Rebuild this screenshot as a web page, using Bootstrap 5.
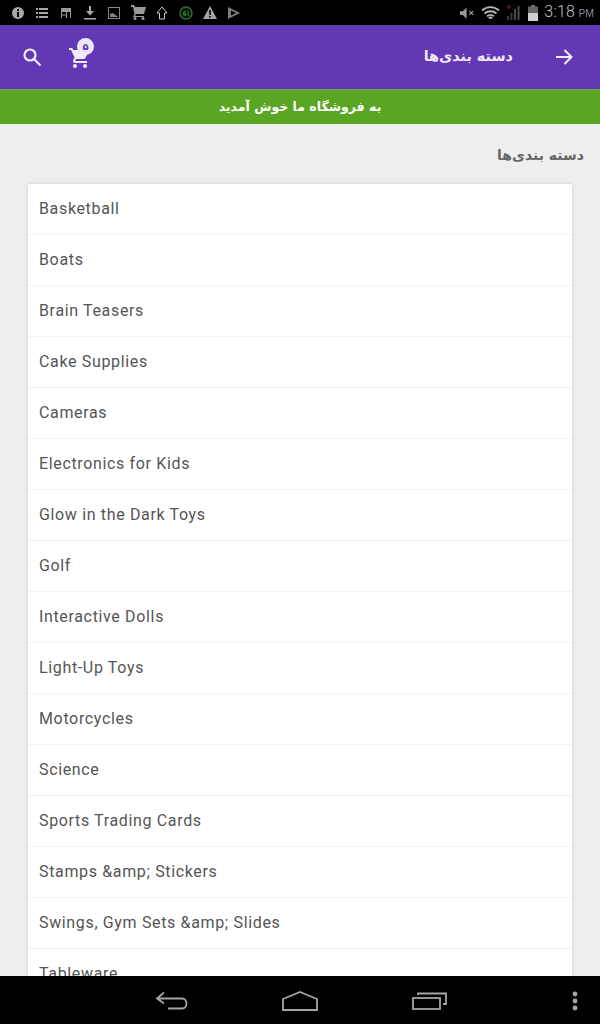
<!DOCTYPE html>
<html lang="fa">
<head>
<meta charset="utf-8">
<title>دسته بندی‌ها</title>
<link rel="stylesheet" href="https://cdn.jsdelivr.net/npm/bootstrap@5.3.0/dist/css/bootstrap.min.css">
<style>
html,body{height:1024px;overflow:hidden;background:#eee}
.shell{height:1024px;font-family:Roboto,"Noto Sans",sans-serif}
.sysbar{height:25px;background:#000;padding:0 6px 0 6px;flex:none}
.sysbar svg{display:block;flex:none}
.sysslot{width:24px;height:25px}
.sysright{gap:6px}
.clock{font-family:Roboto,sans-serif;font-weight:300;font-size:16px;color:#c4c4c4;line-height:25px;letter-spacing:.2px}
.clock span{font-size:10px;margin-left:1px}
.appbar{height:64px;background:#6238b4;flex:none;padding:0 26px 0 22px;color:#fff}
.faword{font-family:"DejaVu Sans","Noto Sans",sans-serif;font-weight:700}
.apptitle{font-size:14.4px;color:#f1e9fb;margin-right:41px;line-height:1;margin-top:-1px}
.cartwrap{position:relative;margin-left:26px;width:24px;height:24px}
.cartbadge{position:absolute;top:-7px;left:9px;width:17px;height:17px;border-radius:50%;background:#efe6fa;color:#6238b4;font-size:10px;font-weight:700;line-height:17px;text-align:center;font-family:"DejaVu Sans",sans-serif}
.promo{height:35px;flex:none;background:#5aa523;border-top:1px solid #6b9f3f;color:#fff;font-size:12.5px;line-height:33px;text-align:center}
.pagearea{flex:1 1 auto;min-height:0;overflow:hidden;background:#eee;padding:0 28px}
.heading{font-size:14px;color:#666;text-align:right;margin:22px -12px 20px 0;line-height:18px}
.catlist{--bs-list-group-border-color:#f3f3f3;--bs-list-group-border-radius:3px;box-shadow:0 0 3px rgba(0,0,0,.18)}
.catlist .list-group-item{height:51px;padding:0 11px;font-size:16px;line-height:49px;color:#555;letter-spacing:.65px;border-left:0;border-right:0}
.catlist .list-group-item:first-child{border-top:0}
.navkeys{height:48px;flex:none;background:#000;padding:2px 22px 0 155px}
.navkeys svg{display:block;flex:none}
.homekey{margin-left:93px}
.recentkey{margin-left:94px}
.morekey{margin-left:auto}
</style>
</head>
<body>
<div class="shell d-flex flex-column">
  <div class="sysbar d-flex align-items-center justify-content-between">
    <div class="d-flex align-items-center">
      <div class="sysslot d-flex align-items-center justify-content-center"><svg width="14" height="14" viewBox="0 0 14 14"><circle cx="7" cy="7" r="6" fill="#a8a8a8"/><rect x="6" y="6" width="2" height="5" fill="#000"/><rect x="6" y="3" width="2" height="2" fill="#000"/></svg></div>
      <div class="sysslot d-flex align-items-center justify-content-center"><svg width="12" height="10" viewBox="0 0 12 10" fill="#a8a8a8"><rect y="0" width="2" height="2"/><rect x="3" y="0" width="9" height="2"/><rect y="4" width="2" height="2"/><rect x="3" y="4" width="9" height="2"/><rect y="8" width="2" height="2"/><rect x="3" y="8" width="9" height="2"/></svg></div>
      <div class="sysslot d-flex align-items-center justify-content-center"><svg width="12" height="12" viewBox="0 0 12 12"><path d="M1 1h10v4H1z" fill="#999"/><path d="M1.500 5v6M10.500 5v6M1.500 8h5M6.500 5v6" stroke="#999" fill="none"/></svg></div>
      <div class="sysslot d-flex align-items-center justify-content-center"><svg width="12" height="14" viewBox="0 0 12 14" fill="#aaa"><path d="M5 0h2v5h3L6 9.500 2 5h3z"/><rect y="12" width="12" height="1.500"/></svg></div>
      <div class="sysslot d-flex align-items-center justify-content-center"><svg width="12" height="12" viewBox="0 0 12 12"><rect x=".5" y=".5" width="11" height="11" fill="none" stroke="#888"/><path d="M2 10V7l3-1 5 4z" fill="#888"/></svg></div>
      <div class="sysslot d-flex align-items-center justify-content-center"><svg width="15" height="15" viewBox="0 0 15 15" fill="#999"><path d="M0 0h3l1 2h11l-2 7H5L4 11h9v1H2l1.500-3L2 2H0z"/><circle cx="4" cy="13.500" r="1.500"/><circle cx="12" cy="13.500" r="1.500"/></svg></div>
      <div class="sysslot d-flex align-items-center justify-content-center"><svg width="12" height="14" viewBox="0 0 12 14"><path d="M6 1l5 6H8.500v6h-5V7H1z" fill="none" stroke="#c8c8c8"/></svg></div>
      <div class="sysslot d-flex align-items-center justify-content-center"><svg width="14" height="14" viewBox="0 0 14 14"><circle cx="7" cy="7" r="6" fill="#0a1a0a" stroke="#2f6b33" stroke-width="1.500"/><path d="M4 9h3M5.500 5L4 8h3M6 5v5M8 6c1-1.500 2.500 0 1 1.500L8 9h2" stroke="#3d8a45" stroke-width=".8" fill="none"/></svg></div>
      <div class="sysslot d-flex align-items-center justify-content-center"><svg width="14" height="13" viewBox="0 0 14 13"><path d="M7 0l7 13H0z" fill="#a5a5a5"/><rect x="6.200" y="4" width="1.600" height="5" fill="#000"/><rect x="6.200" y="10" width="1.600" height="1.600" fill="#000"/></svg></div>
      <div class="sysslot d-flex align-items-center justify-content-center"><svg width="12" height="12" viewBox="0 0 12 12"><path d="M0 0l12 6-12 6z" fill="#7c7c7c"/><path d="M3 3.500L8 6l-5 2.500z" fill="#000"/></svg></div>
    </div>
    <div class="d-flex align-items-center sysright">
      <svg width="15" height="12" viewBox="0 0 16 12" fill="#9a9a9a"><path d="M0 4h3l4-4v12L3 8H0z"/><path d="M10 4l4 4M14 4l-4 4" stroke="#9a9a9a" stroke-width="1.400"/></svg>
      <svg width="19" height="14" viewBox="0 0 19 14" fill="none" stroke="#b5b5b5" stroke-width="1.800"><path d="M1 4.500c5-4.500 12-4.500 17 0M3.500 7.500c3.500-3 8.500-3 12 0M6 10.300c2-1.600 5-1.600 7 0"/><path d="M7.800 12.200c1-.8 2.400-.8 3.400 0" stroke-width="2"/></svg>
      <svg width="16" height="15" viewBox="0 0 14 15"><rect x="0" y="11" width="2" height="4" fill="#3a3a3a"/><rect x="3.500" y="8" width="2" height="7" fill="#3f3f3f"/><rect x="7" y="4" width="2" height="11" fill="#4a4a4a"/><rect x="10.500" y="1" width="2" height="14" fill="#4a4a4a"/><circle cx="2" cy="2" r="2" fill="#5c0f18"/></svg>
      <svg width="10" height="16" viewBox="0 0 10 16"><rect x="3" y="0" width="4" height="2" fill="#777"/><rect x="0" y="1.500" width="10" height="14.500" fill="#666"/><rect x="0" y="8" width="10" height="8" fill="#cfcfcf"/></svg>
      <div class="clock">3:18<span> PM</span></div>
    </div>
  </div>

  <div class="appbar d-flex align-items-center justify-content-between">
    <div class="d-flex align-items-center">
      <svg width="20" height="20" viewBox="0 0 20 20" fill="none" stroke="#f3ecfb" stroke-width="2.200"><circle cx="8" cy="8" r="5.500"/><path d="M12 12l6.500 6.500"/></svg>
      <div class="cartwrap">
        <svg width="24" height="24" viewBox="0 0 24 24" fill="#f3ecfb"><path d="M7 18c-1.100 0-2 .9-2 2s.9 2 2 2 2-.9 2-2-.9-2-2-2zM1 2v2h2l3.600 7.590-1.350 2.450c-.16.28-.25.61-.25.960 0 1.100.9 2 2 2h12v-2H7.420c-.14 0-.25-.11-.25-.25l.03-.12.9-1.630h7.450c.75 0 1.410-.41 1.750-1.030L21.700 4H5.210l-.94-2H1zm16 16c-1.100 0-2 .9-2 2s.9 2 2 2 2-.9 2-2-.9-2-2-2z"/></svg>
        <div class="cartbadge">۵</div>
      </div>
    </div>
    <div class="d-flex align-items-center">
      <div class="apptitle faword" dir="rtl">دسته بندی‌ها</div>
      <svg width="20" height="20" viewBox="0 0 20 20" fill="none" stroke="#f3ecfb" stroke-width="2"><path d="M2 10h15.500M10.500 3l7 7-7 7"/></svg>
    </div>
  </div>

  <div class="promo faword" dir="rtl">به فروشگاه ما خوش آمدید</div>

  <div class="pagearea">
    <div class="heading faword" dir="rtl">دسته بندی‌ها</div>
    <div class="list-group catlist">
      <div class="list-group-item">Basketball</div>
      <div class="list-group-item">Boats</div>
      <div class="list-group-item">Brain Teasers</div>
      <div class="list-group-item">Cake Supplies</div>
      <div class="list-group-item">Cameras</div>
      <div class="list-group-item">Electronics for Kids</div>
      <div class="list-group-item">Glow in the Dark Toys</div>
      <div class="list-group-item">Golf</div>
      <div class="list-group-item">Interactive Dolls</div>
      <div class="list-group-item">Light-Up Toys</div>
      <div class="list-group-item">Motorcycles</div>
      <div class="list-group-item">Science</div>
      <div class="list-group-item">Sports Trading Cards</div>
      <div class="list-group-item">Stamps &amp;amp; Stickers</div>
      <div class="list-group-item">Swings, Gym Sets &amp;amp; Slides</div>
      <div class="list-group-item">Tableware</div>
    </div>
  </div>

  <div class="navkeys d-flex align-items-center">
    <svg width="34" height="20" viewBox="0 0 34 20" fill="none" stroke="#a5a5a5" stroke-width="1.800"><path d="M9 1.500L2 7.500l7 5M2 7.500h25c6 0 6 10 0 10H13"/></svg>
    <svg class="homekey" width="36" height="20" viewBox="0 0 36 20" fill="none" stroke="#a5a5a5" stroke-width="1.800"><path d="M1 8L18 1l17 7v11H1z"/></svg>
    <svg class="recentkey" width="35" height="18" viewBox="0 0 35 18" fill="none" stroke="#a5a5a5" stroke-width="1.800"><rect x="1" y="6" width="27" height="11"/><path d="M6 3V1.500h28V12h-3"/></svg>
    <svg class="morekey" width="6" height="20" viewBox="0 0 6 20" fill="#a5a5a5"><circle cx="3" cy="3" r="2.400"/><circle cx="3" cy="10" r="2.400"/><circle cx="3" cy="17" r="2.400"/></svg>
  </div>
</div>
<script src="https://cdn.jsdelivr.net/npm/bootstrap@5.3.0/dist/js/bootstrap.bundle.min.js"></script>
</body>
</html>
